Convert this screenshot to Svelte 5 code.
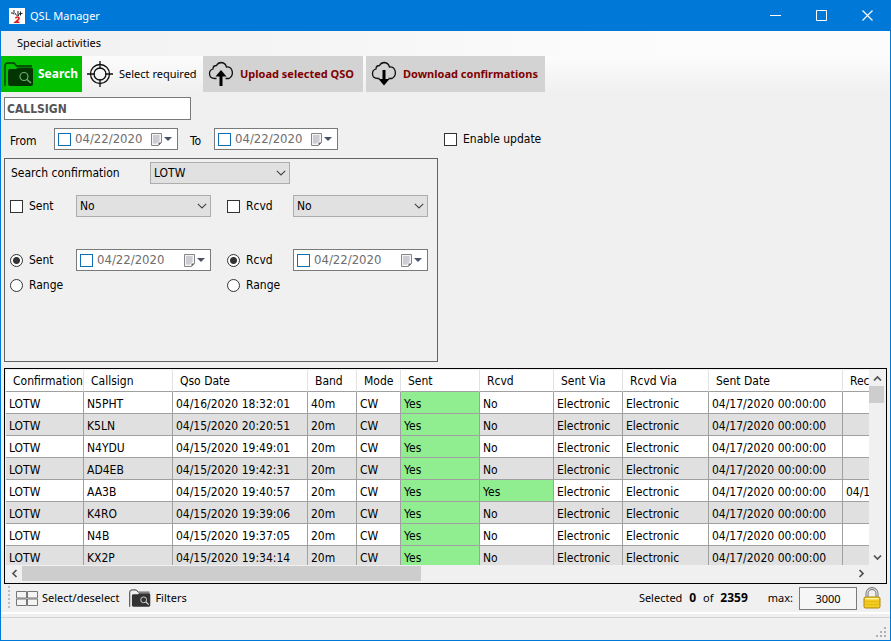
<script>
  const columns = [
    { title: 'Confirmation', width: 78 },
    { title: 'Callsign', width: 89 },
    { title: 'Qso Date', width: 135 },
    { title: 'Band', width: 49 },
    { title: 'Mode', width: 44 },
    { title: 'Sent', width: 79 },
    { title: 'Rcvd', width: 74 },
    { title: 'Sent Via', width: 69 },
    { title: 'Rcvd Via', width: 86 },
    { title: 'Sent Date', width: 134 },
    { title: 'Received Date', width: 134 }
  ];
  const tableWidth = columns.reduce((sum, c) => sum + c.width, 0);

  const qso = (call, date, band, rcvd = 'No', rcvdDate = '') => [
    'LOTW', call, date, band, 'CW', 'Yes', rcvd, 'Electronic', 'Electronic', '04/17/2020 00:00:00', rcvdDate
  ];
  const rows = [
    qso('N5PHT', '04/16/2020 18:32:01', '40m'),
    qso('K5LN', '04/15/2020 20:20:51', '20m'),
    qso('N4YDU', '04/15/2020 19:49:01', '20m'),
    qso('AD4EB', '04/15/2020 19:42:31', '20m'),
    qso('AA3B', '04/15/2020 19:40:57', '20m', 'Yes', '04/17/2020 00:00:00'),
    qso('K4RO', '04/15/2020 19:39:06', '20m'),
    qso('N4B', '04/15/2020 19:37:05', '20m'),
    qso('KX2P', '04/15/2020 19:34:14', '20m')
  ];

  let callsign = $state('CALLSIGN');
  let sentMode = $state('date');
  let rcvdMode = $state('date');
</script>

{#snippet folder()}
  <svg class="folder" viewBox="0 0 30 26" aria-hidden="true">
    <path d="M1 25V5q0-3 3-3h6l2.500 3H28" fill="none" stroke="currentColor" stroke-width="1.300" />
    <path d="M4 10q0-2 2-2h6l2-1.500h13q2 0 2 2V23q0 2-2 2H6q-2 0-2-2z" fill="currentColor" />
    <circle cx="20" cy="15.500" r="4" fill="none" stroke="var(--lens)" stroke-width="1.200" />
    <path d="M23 18.500l4 3.500" stroke="var(--lens)" stroke-width="1.500" />
  </svg>
{/snippet}

{#snippet cloud(down)}
  <svg class="cloud" viewBox="0 0 26 26" aria-hidden="true">
    <path d="M8.500 17.500H7Q1.500 17.500 1.500 12.500 1.500 9 5 8 5 4.500 8.500 4.500 10 1.500 13.500 1.500 17.500 2 18.500 6 22.500 5.500 24 9.500 25.500 15 21 17.500H17.500" fill="none" stroke="#111" stroke-width="1.300" />
    {#if down}
      <path d="M11.500 9h3v9h4L13 24.500 7.500 18h4z" fill="#000" />
    {:else}
      <path d="M11.500 25h3v-9.500h4L13 9l-5.500 6.500h4z" fill="#000" />
    {/if}
  </svg>
{/snippet}

{#snippet datePicker(name)}
  <span class="date">
    <input class="tick" type="checkbox" aria-label="Use {name} date" />
    <input class="day" type="text" value="04/22/2020" aria-label="{name} date" />
    <button class="open" aria-label="Pick {name} date">
      <svg width="21" height="13" viewBox="0 0 21 13">
        <path d="M.5 .5h10v9l-3 3h-7z" fill="#f4f4f8" stroke="#85858a" />
        <path d="M2 3h7M2 5h7M2 7h7M2 9h5M3 2v9M5 2v9M7 2v7" stroke="#a6a7b0" stroke-width=".6" />
        <path d="M7.500 12.500v-3h3z" fill="#666" />
        <path d="M13 4h8l-4 4z" fill="#4b5268" />
      </svg>
    </button>
  </span>
{/snippet}

{#snippet combo(name, options)}
  <span class="combo">
    <select aria-label={name}>
      {#each options as o}<option>{o}</option>{/each}
    </select>
    <svg width="10" height="6" viewBox="0 0 10 6" aria-hidden="true"><path d="M.8 .8L5 5 9.200 .8" fill="none" stroke="#444" stroke-width="1.100" /></svg>
  </span>
{/snippet}

{#snippet arrow(d)}
  <svg width="9" height="9" viewBox="0 0 9 9" aria-hidden="true"><path {d} fill="none" stroke="#505050" stroke-width="1.700" /></svg>
{/snippet}

<div class="window">
  <header class="titlebar">
    <svg width="16" height="16" viewBox="0 0 16 16" aria-hidden="true">
      <rect width="16" height="16" fill="#fff" />
      <path d="M2 5h2l1 1.500M5 2v3M6 5l1.500 2.500M9 3v5l1.500-2.500h3M11.500 3.500v4" fill="none" stroke="#222" />
      <path d="M6.500 10.500q.5-1.500 2-1.500 1.700 0 1.500 1.500-.2 1-3.500 3.700h4" fill="none" stroke="#d81e1e" stroke-width="1.600" />
    </svg>
    <h1>QSL Manager</h1>
    <button aria-label="Minimize"><svg width="11" height="11" viewBox="0 0 11 11"><path d="M0 5.500h11" stroke="#fff" /></svg></button>
    <button aria-label="Maximize"><svg width="11" height="11" viewBox="0 0 11 11"><path d="M.5 .5h10v10H.5z" fill="none" stroke="#fff" /></svg></button>
    <button aria-label="Close"><svg width="11" height="11" viewBox="0 0 11 11"><path d="M.5 .5l10 10M10.500 .5l-10 10" stroke="#fff" stroke-width="1.200" /></svg></button>
  </header>

  <nav class="menu"><button>Special activities</button></nav>

  <div class="toolbar">
    <button class="search">{@render folder()}Search</button>
    <button class="required">
      <svg width="26" height="26" viewBox="0 0 26 26" aria-hidden="true">
        <g fill="none" stroke="#111" stroke-width="1.300">
          <circle cx="13" cy="13" r="9.500" /><circle cx="13" cy="13" r="6" />
          <path d="M13 0v8M13 18v8M0 13h8M18 13h8" />
        </g>
      </svg>
      Select required
    </button>
    <button class="transfer">{@render cloud(false)}Upload selected QSO</button>
    <button class="transfer">{@render cloud(true)}Download confirmations</button>
  </div>

  <main>
    <input class="callsign" type="text" bind:value={callsign} aria-label="Callsign" />

    <div class="period">
      <span class="word">From</span>{@render datePicker('From')}
      <span class="word to">To</span>{@render datePicker('To')}
      <label class="update"><input type="checkbox" />Enable update</label>
    </div>

    <section class="filters">
      <div class="service"><span>Search confirmation</span>{@render combo('Search confirmation', ['LOTW', 'eQSL', 'QSL'])}</div>
      <div class="fields">
        <label><input type="checkbox" />Sent</label>
        {@render combo('Sent status', ['No', 'Yes'])}
        <label class="second"><input type="checkbox" />Rcvd</label>
        {@render combo('Received status', ['No', 'Yes'])}
      </div>
      <div class="fields dates">
        <label><input type="radio" name="sent" value="date" bind:group={sentMode} />Sent</label>
        {@render datePicker('Sent')}
        <label class="second"><input type="radio" name="rcvd" value="date" bind:group={rcvdMode} />Rcvd</label>
        {@render datePicker('Received')}
        <label class="range"><input type="radio" name="sent" value="range" bind:group={sentMode} />Range</label>
        <label class="range second"><input type="radio" name="rcvd" value="range" bind:group={rcvdMode} />Range</label>
      </div>
    </section>

    <section class="grid">
      <div class="viewport">
        <table style="width: {tableWidth}px">
          <colgroup>{#each columns as c}<col style="width: {c.width}px" />{/each}</colgroup>
          <thead><tr>{#each columns as c}<th scope="col">{c.title}</th>{/each}</tr></thead>
          <tbody>
            {#each rows as row}
              <tr>{#each row as cell}<td class:yes={cell === 'Yes'}>{cell}</td>{/each}</tr>
            {/each}
          </tbody>
        </table>
      </div>
      <div class="vbar">
        <button aria-label="Scroll up">{@render arrow('M1 6.500L4.500 3 8 6.500')}</button>
        <span class="thumb"></span>
        <button aria-label="Scroll down">{@render arrow('M1 2.500L4.500 6 8 2.500')}</button>
      </div>
      <div class="hbar">
        <button aria-label="Scroll left">{@render arrow('M6.500 1L3 4.500 6.500 8')}</button>
        <span class="track"><span class="thumb"></span></span>
        <button aria-label="Scroll right">{@render arrow('M2.500 1L6 4.500 2.500 8')}</button>
      </div>
    </section>
  </main>

  <div class="actions">
    <span class="grip"></span>
    <button>
      <svg width="22" height="15" viewBox="0 0 22 15" aria-hidden="true"><path d="M.5 .5h10v6.500H.5zM11.500 .5h10v6.500h-10zM.5 8h10v6.500H.5zM11.500 8h10v6.500h-10z" fill="#f4f4f4" stroke="#777" /></svg>
      Select/deselect
    </button>
    <button class="filter">{@render folder()}Filters</button>
    <p class="count">Selected <b>0</b> of <b>2359</b></p>
    <label for="max">max:</label>
    <input id="max" type="text" value="3000" />
    <button class="lock" aria-label="Lock">
      <svg width="18" height="22" viewBox="0 0 18 22" aria-hidden="true">
        <path d="M4 11V6.500a5 5 0 0 1 10 0V11" fill="none" stroke="#777" stroke-width="3" />
        <path d="M4 11V6.500a5 5 0 0 1 10 0V11" fill="none" stroke="#ddd" stroke-width="1.200" />
        <rect x="1" y="10" width="16" height="11" rx="1.500" fill="#f2cc20" stroke="#ad8510" />
        <path d="M2.500 11.700h13" stroke="#fff3a0" stroke-width="1.500" />
        <path d="M2.500 14.500h13M2.500 17.500h13" stroke="#e6bb14" />
      </svg>
    </button>
  </div>

  <footer>
    <svg width="11" height="11" viewBox="0 0 11 11" aria-hidden="true"><path d="M8 0h2v2H8zM4 4h2v2H4zM8 4h2v2H8zM0 8h2v2H0zM4 8h2v2H4zM8 8h2v2H8z" fill="#b0b0b0" /></svg>
  </footer>
</div>

<style>
  :global(body) { margin: 0; background: #f0f0f0; }
  * { box-sizing: border-box; }
  .window {
    --ui: "Noto Sans", "Open Sans", sans-serif;
    --form: "DejaVu Sans Condensed", "DejaVu Sans", sans-serif;
    height: 100vh;
    min-height: 560px;
    display: flex;
    flex-direction: column;
    border: 1px solid #0078d7;
    border-top: 0;
    background: #f0f0f0;
    color: #000;
    font: 12px/16px var(--form);
  }
  button, input, select { font: inherit; color: inherit; margin: 0; border-radius: 0; }
  button { border: 0; padding: 0; background: none; display: flex; align-items: center; white-space: nowrap; }
  svg { display: block; flex: none; }

  .titlebar { height: 31px; display: flex; align-items: center; padding-left: 8px; background: #0078d7; color: #fff; flex: none; }
  h1 { flex: 1; margin: 0 0 0 5px; font: 11px/16px var(--ui); }
  .titlebar button { width: 46px; height: 31px; justify-content: center; }

  .menu { height: 25px; flex: none; display: flex; padding: 0 16px 2px; background: linear-gradient(90deg, #f0f0f0, #fcfcfc 75%); font: 11px/16px var(--ui); }

  .toolbar { height: 36px; flex: none; display: flex; background: linear-gradient(#fcfcfc, #f0f0f0); font: 11px/16px var(--ui); }
  .toolbar button { height: 36px; }
  .search { --lens: #6fae6f; width: 81px; padding-left: 3px; gap: 4px; background: #00c000; color: #fff; font-size: 12px; font-weight: 700; }
  .search .folder { color: #033503; }
  .folder { width: 30px; height: 26px; }
  .required { width: 121px; padding-left: 5px; gap: 6px; }
  .transfer { min-width: 160px; padding: 0 7px 0 5px; gap: 6px; margin-right: 3px; background: #d3d3d3; color: #800000; font-weight: 700; }
  .cloud { width: 26px; height: 26px; }

  main { flex: 1; min-height: 0; display: flex; flex-direction: column; padding: 5px 3px 0; }
  .callsign { width: 187px; height: 23px; flex: none; padding: 0 2px; border: 1px solid #7a7a7a; background: #fff; color: #555; font-weight: 700; }

  .period { display: flex; align-items: center; margin-top: 8px; padding-left: 6px; }
  .period .date { width: 124px; }
  .word { width: 44px; padding-top: 4px; }
  .to { width: 36px; padding-left: 12px; }
  label { display: flex; align-items: center; gap: 6px; white-space: nowrap; }
  .update { margin-left: 106px; }

  input[type="checkbox"], input[type="radio"] { appearance: none; flex: none; width: 13px; height: 13px; border: 1px solid #333; background: #fff; }
  input[type="radio"] { border-radius: 50%; }
  input[type="checkbox"]:checked { background: #333; }
  input[type="radio"]:checked { background: radial-gradient(circle, #333 0 3px, #fff 4px); }

  .date { display: flex; align-items: center; height: 22px; padding: 0 5px 0 3px; border: 1px solid #7a7a7a; background: #fff; }
  .date input.tick { border-color: #0f6fb5; }
  .day { flex: 1; min-width: 0; padding: 0 0 0 4px; border: 0; outline: 0; background: none; color: #6d6d6d; font-size: 13px; }

  .combo { display: grid; align-items: center; height: 22px; }
  .combo select { grid-area: 1 / 1; width: 100%; height: 22px; padding: 0 3px; border: 1px solid #adadad; background: #e1e1e1; appearance: none; }
  .combo svg { grid-area: 1 / 1; justify-self: end; margin-right: 4px; pointer-events: none; }

  .filters { width: 434px; height: 204px; flex: none; margin-top: 8px; padding: 3px 5px; border: 1px solid #646464; }
  .service { display: grid; grid-template-columns: 139px 140px; padding-left: 1px; }
  .service span:first-child { padding-top: 3px; }
  .fields { display: grid; grid-template-columns: 66px 135px 82px 135px; align-items: center; margin-top: 11px; }
  .second { padding-left: 16px; }
  .dates { margin-top: 32px; row-gap: 6px; }
  .range { grid-column: span 2; }

  .grid { flex: 1; min-height: 0; margin-top: 6px; border: 1px solid #000; padding: 1px; display: grid; grid-template: minmax(0, 1fr) 17px / minmax(0, 1fr) 16px; background: #f0f0f0; }
  .viewport { overflow: hidden; background: #fff; }
  table { table-layout: fixed; border-collapse: separate; border-spacing: 0; }
  th, td { height: 22px; padding: 2px 3px 0; overflow: hidden; white-space: nowrap; text-align: left; font-weight: 400; border-right: 1px solid #a0a0a0; border-bottom: 1px solid #a0a0a0; }
  th { padding: 0 0 0 7px; border-right-color: #e2e2e2; }
  tbody tr:nth-child(even) { background: #e0e0e0; }
  td.yes { background: #90ee90; }

  .vbar { display: flex; flex-direction: column; }
  .vbar button, .hbar button { width: 16px; height: 16px; justify-content: center; }
  .vbar .thumb { width: 15px; height: 17px; background: #cdcdcd; }
  .vbar button:last-child { margin-top: auto; }
  .hbar { display: flex; align-items: center; }
  .track { flex: 1; height: 15px; }
  .hbar .thumb { display: block; width: 48%; height: 15px; background: #cdcdcd; }

  .actions { height: 30px; flex: none; display: flex; align-items: center; padding: 0 9px 0 7px; border-bottom: 2px solid #fff; font: 11px/16px var(--ui); }
  .grip { width: 2px; height: 24px; margin-right: 6px; background: repeating-linear-gradient(#bbb 0 2px, #f0f0f0 2px 4px); }
  .actions button { gap: 4px; }
  .actions .filter { --lens: #ddd; margin-left: 10px; }
  .filter .folder { width: 22px; height: 20px; color: #333; }
  .count { margin: 0 16px 0 auto; }
  .count b { margin: 0 4px; font-size: 12px; }
  #max { width: 58px; height: 23px; margin: 0 6px; border: 1px solid #7a7a7a; background: #f6f6f6; text-align: center; }

  footer { height: 26px; flex: none; display: flex; justify-content: flex-end; align-items: flex-end; padding: 0 3px 2px 0; border-top: 3px solid #f0f0f0; box-shadow: inset 0 1px #d4d4d4; }
</style>
